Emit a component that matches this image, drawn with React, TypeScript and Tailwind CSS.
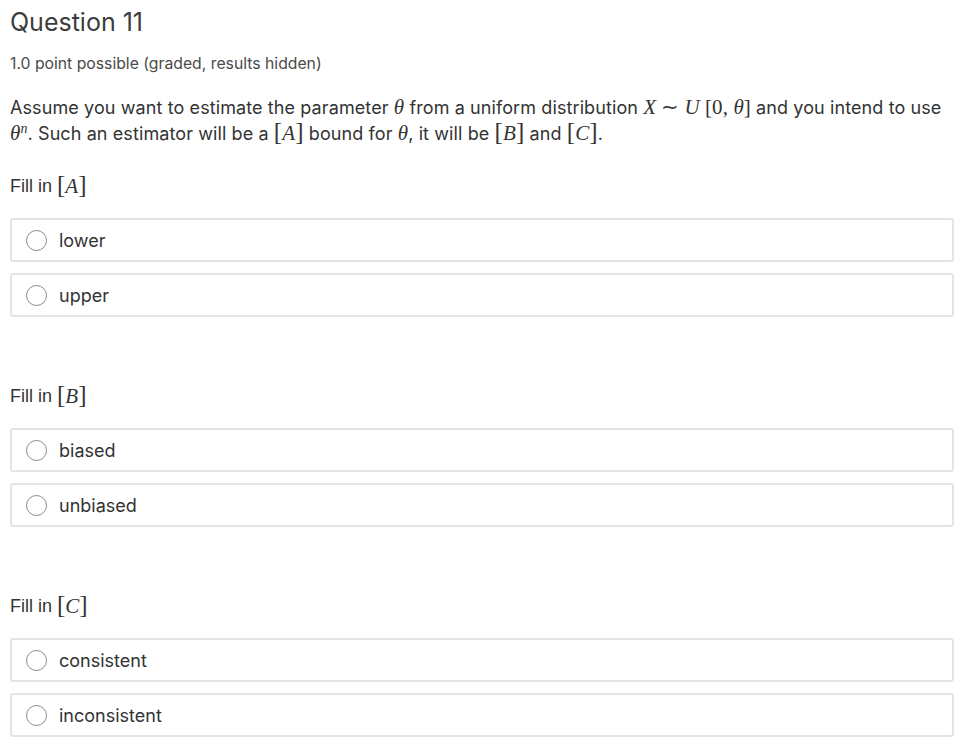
import React from 'react';

const M = ({ children }: { children: React.ReactNode }) => (
  <span className="font-['Liberation_Serif',serif] italic text-[21px] leading-[0]">{children}</span>
);

const Br = ({ children }: { children: React.ReactNode }) => (
  <span className="font-['Liberation_Serif',serif] text-[21px] leading-[0]">{children}</span>
);

const Var = ({ v }: { v: string }) => (
  <span className="font-['Liberation_Serif',serif] leading-[0]">
    <span className="text-[25px] font-light leading-[0]">[</span>
    <span className="italic text-[21px] leading-[0]">{v}</span>
    <span className="text-[25px] font-light leading-[0]">]</span>
  </span>
);

const Option = ({ label }: { label: string }) => (
  <label className="flex items-center h-[44px] border-2 border-[#e4e4e4] rounded-[3px] pl-[14px] cursor-pointer">
    <span className="w-[21px] h-[21px] rounded-full border border-[#8a8a8a] bg-white shrink-0" />
    <span className="ml-[12px] text-[18px] text-[#333]">{label}</span>
  </label>
);

const Group = ({ v, options }: { v: string; options: string[] }) => (
  <div>
    <div className="font-['Liberation_Sans',sans-serif] text-[18px] text-[#333] h-[26px] flex items-center">
      Fill in&nbsp;<Var v={v} />
    </div>
    <div className="mt-[19px] flex flex-col gap-[11px]">
      {options.map((o) => (
        <Option key={o} label={o} />
      ))}
    </div>
  </div>
);

export default function App() {
  return (
    <div className="bg-white w-[968px] h-[756px] overflow-hidden font-['Inter',sans-serif] text-[#333] pl-[10px] pr-[14px] pt-[7px]">
      <h2 className="text-[25px] leading-[30px] text-[#3c3c3c]">Question 11</h2>
      <div className="mt-[18px] text-[15.75px] leading-[18px] text-[#4a4a4a]">1.0 point possible (graded, results hidden)</div>

      <p className="mt-[22px] text-[18px] leading-[26px] tracking-[0.1px] whitespace-nowrap">
        Assume you want to estimate the parameter <M>θ</M> from a uniform distribution{' '}
        <M>X</M> <Br>∼</Br> <M>U</M> <Br>[0, </Br><M>θ</M><Br>]</Br> and you intend to use
        <br />
        <M>θ</M>
        <sup className="font-['Liberation_Serif',serif] italic text-[14px] leading-[0]">n</sup>. Such an estimator will be a{' '}
        <Var v="A" /> bound for <M>θ</M>, it will be <Var v="B" /> and <Var v="C" />.
      </p>

      <div className="mt-[26px] flex flex-col gap-[66px]">
        <Group v="A" options={['lower', 'upper']} />
        <Group v="B" options={['biased', 'unbiased']} />
        <Group v="C" options={['consistent', 'inconsistent']} />
      </div>
    </div>
  );
}
